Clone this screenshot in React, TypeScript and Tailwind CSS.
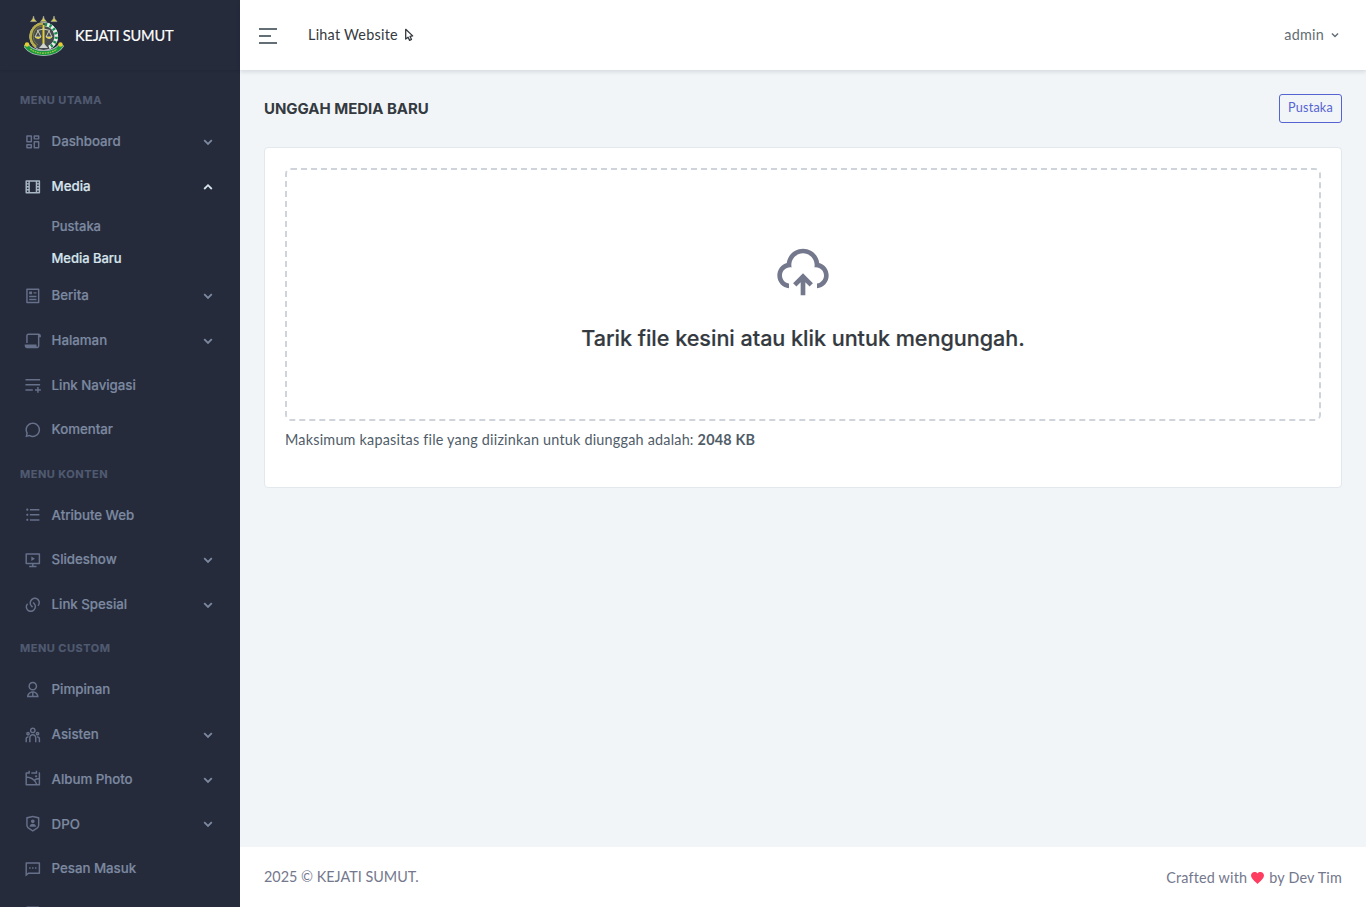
import React from "react";
import {
  RiArticleLine,
  RiChat3Line,
  RiDashboardLine,
  RiFilePaper2Line,
  RiFilmLine,
  RiGalleryLine,
  RiLinksLine,
  RiListUnordered,
  RiMessage2Line,
  RiPlayListAddLine,
  RiShieldUserLine,
  RiSlideshow3Line,
  RiTeamLine,
  RiUploadCloud2Line,
  RiUser2Line,
} from "react-icons/ri";

type Icon = React.ComponentType<{ className?: string }>;
type Item = { label: string; icon: Icon; expandable?: boolean; active?: boolean; children?: { label: string; active?: boolean }[] };

const sections: { title: string; items: Item[] }[] = [
  {
    title: "MENU UTAMA",
    items: [
      { label: "Dashboard", icon: RiDashboardLine, expandable: true },
      {
        label: "Media",
        icon: RiFilmLine,
        expandable: true,
        active: true,
        children: [{ label: "Pustaka" }, { label: "Media Baru", active: true }],
      },
      { label: "Berita", icon: RiArticleLine, expandable: true },
      { label: "Halaman", icon: RiFilePaper2Line, expandable: true },
      { label: "Link Navigasi", icon: RiPlayListAddLine },
      { label: "Komentar", icon: RiChat3Line },
    ],
  },
  {
    title: "MENU KONTEN",
    items: [
      { label: "Atribute Web", icon: RiListUnordered },
      { label: "Slideshow", icon: RiSlideshow3Line, expandable: true },
      { label: "Link Spesial", icon: RiLinksLine, expandable: true },
    ],
  },
  {
    title: "MENU CUSTOM",
    items: [
      { label: "Pimpinan", icon: RiUser2Line },
      { label: "Asisten", icon: RiTeamLine, expandable: true },
      { label: "Album Photo", icon: RiGalleryLine, expandable: true },
      { label: "DPO", icon: RiShieldUserLine, expandable: true },
      { label: "Pesan Masuk", icon: RiMessage2Line },
      { label: "", icon: RiArticleLine },
    ],
  },
];

function Chevron({ up = false, className = "" }: { up?: boolean; className?: string }) {
  return (
    <svg viewBox="0 0 10 10" className={className} fill="none" stroke="currentColor" strokeWidth="1.8">
      <path d={up ? "M1.2 7 5 3.2 8.8 7" : "M1.2 3.2 5 7 8.8 3.2"} />
    </svg>
  );
}

function Emblem() {
  return (
    <svg viewBox="0 0 40 40" className="mt-0.5 h-10 w-10 shrink-0">
      {[9.5, 19.5, 30].map((x) => (
        <path key={x} d={`M${x} 0l.8 3 2.2 2.6h-6L${x - 0.8} 3z`} fill="#d9cd4a" stroke="#a9aba4" strokeWidth=".6" />
      ))}
      <circle cx="19.7" cy="20.5" r="14" fill="#454b50" stroke="#b9bfc4" strokeWidth="1" />
      <path d="M19 7.5A13 13 0 0 0 12 31" fill="none" stroke="#b9ad48" strokeWidth="2.6" />
      <path d="M18 10a10.5 10.5 0 0 0-4 19" fill="none" stroke="#7c7a3e" strokeWidth="1" />
      <path d="M21 8.4a12 12 0 0 1 4 23" fill="none" stroke="#e9eee9" strokeWidth="3.6" />
      <path d="M21 8.4a12 12 0 0 1 4 23" fill="none" stroke="#168f4c" strokeWidth="3.2" strokeDasharray="2.2 2.4" />
      <path d="M19.5 9v22" stroke="#e3cf3c" strokeWidth="2" />
      <path d="M13 14.5q6.5-3 13 0M14 15l-3 6h6zM25 15l-3 6h6z" fill="none" stroke="#dfe0bd" strokeWidth=".9" />
      <path d="M10.8 21h6.4q-3 4-6.4 0zM21.8 21h6.4q-3 4-6.4 0z" fill="#e3d25a" />
      <path d="M15 32l4.5-5 4.5 5z" fill="#cfd4d0" />
      <path d="M1.5 28.5q5 8.6 18.2 8.6T37.8 28.5" fill="none" stroke="#b7bdc0" strokeWidth="5.6" />
      <path d="M1.8 29q5 8.1 17.9 8.1T37.5 29" fill="none" stroke="#189a3d" strokeWidth="4.2" />
      <path d="M6.5 33q5 4.1 13.2 4.1T32.9 33" fill="none" stroke="#b9d04a" strokeWidth="1.2" strokeDasharray="1.6 .9" />
      <circle cx="3" cy="28.5" r="2.2" fill="#e5cf2e" />
      <circle cx="36.5" cy="28.5" r="2.2" fill="#e5cf2e" />
    </svg>
  );
}

function NavItem({ item }: { item: Item }) {
  const IconView = item.icon;
  return (
    <li>
      <a
        className={`flex h-[44.75px] items-center pr-[27px] pl-6 text-[13.3px] font-medium ${
          item.active ? "text-[#d7e4ec]" : "text-[#7c89a0]"
        }`}
      >
        <IconView className={`mr-[10px] h-[17.6px] w-[17.6px] shrink-0 ${item.active ? "text-[#a9b6c4]" : "text-[#66708a]"}`} />
        <span className="grow pt-[1.1px] tracking-[-0.03px] [-webkit-text-stroke:0.2px_currentColor]">{item.label}</span>
        {item.expandable && <Chevron up={item.active} className={`h-[10px] w-[10px] ${item.active ? "" : "mt-px"}`} />}
      </a>
      {item.children && (
        <ul className="h-[64.4px] pl-[51.5px] text-[13px] font-medium">
          {item.children.map((child) => (
            <li
              key={child.label}
              className={`flex h-8 items-center pt-[3px] tracking-[-0.03px] [-webkit-text-stroke:0.2px_currentColor] ${
                child.active ? "text-[#d7e4ec]" : "text-[#7c89a0]"
              }`}
            >
              {child.label}
            </li>
          ))}
        </ul>
      )}
    </li>
  );
}

function Sidebar() {
  return (
    <aside className="flex h-full w-60 shrink-0 flex-col overflow-hidden bg-[#252b3b]">
      <div className="flex h-[70px] shrink-0 items-center pl-6 shadow-[0_1px_2px_rgba(20,24,36,0.2)]">
        <Emblem />
        <span className="ml-[11px] pt-px font-[Lato,sans-serif] text-[14.6px] tracking-[-0.22px] text-white [-webkit-text-stroke:0.2px_currentColor]">
          KEJATI SUMUT
        </span>
      </div>
      <nav className="pt-[9px]">
        {sections.map((section) => (
          <section key={section.title}>
            <h2 className="flex h-[40.4px] items-center pt-[3px] pl-5 text-[11px] font-bold tracking-[0.48px] text-[#505a70] [-webkit-text-stroke:0.2px_currentColor]">
              {section.title}
            </h2>
            <ul>
              {section.items.map((item) => (
                <NavItem key={item.label} item={item} />
              ))}
            </ul>
          </section>
        ))}
      </nav>
    </aside>
  );
}

export default function App() {
  return (
    <div className="flex h-[907px] w-full overflow-hidden bg-[#f1f5f7] font-[Inter,sans-serif]">
      <Sidebar />
      <div className="flex min-w-0 grow flex-col">
        <header className="flex h-[70px] shrink-0 items-center bg-white pr-[27px] pl-[19px] font-[Lato,sans-serif] text-[14.4px] shadow-[0_2px_4px_rgba(15,34,58,0.12)]">
          <div className="mt-0.5 flex flex-col gap-[5px]">
            <span className="h-0.5 w-[18px] bg-[#636e75]" />
            <span className="h-0.5 w-3 bg-[#636e75]" />
            <span className="h-0.5 w-[18px] bg-[#636e75]" />
          </div>
          <a className="ml-[31px] flex items-center tracking-[0.24px] text-[#343a40]">
            <span>Lihat Website</span>
            <svg viewBox="0 0 10 14" className="ml-[6px] h-[14px] w-[10px]" fill="none" stroke="currentColor" strokeWidth="1.3" strokeLinejoin="round">
              <path d="M1.7 1.3 8.7 7.9 6 8.3 7.5 11.5 5.6 12.4 4.1 9.2 1.7 11z" />
            </svg>
          </a>
          <button className="ml-auto flex items-center tracking-[0.24px] text-[#636e75]">
            <span>admin</span>
            <Chevron className="ml-[7px] h-2 w-2" />
          </button>
        </header>
        <main className="grow px-6 pt-6">
          <div className="flex h-[29px] items-center justify-between">
            <h1 className="pt-px text-[15px] font-bold tracking-[-0.03px] text-[#343a40]">UNGGAH MEDIA BARU</h1>
            <button className="h-[29px] w-[63px] rounded-[3px] border border-[#5664d2] pb-px font-[Lato,sans-serif] text-[12.6px] tracking-[0.2px] text-[#5664d2]">
              Pustaka
            </button>
          </div>
          <div className="mt-6 h-[341px] rounded border border-[#e2e8ee] bg-white px-5 pt-5">
            <div className="flex h-[253px] flex-col items-center rounded-md border-2 border-dashed border-[#ced4da] pt-[74px]">
              <RiUploadCloud2Line className="h-14 w-14 text-[#74788d]" />
              <p className="mt-[25px] text-[21.6px] leading-[26px] font-medium tracking-[-0.03px] text-[#343a40] [-webkit-text-stroke:0.2px_currentColor]">
                Tarik file kesini atau klik untuk mengungah.
              </p>
            </div>
            <p className="mt-2 font-[Lato,sans-serif] text-[14.4px] leading-[21px] tracking-[0.21px] text-[#505d69]">
              Maksimum kapasitas file yang diizinkan untuk diunggah adalah: <b>2048 KB</b>
            </p>
          </div>
        </main>
        <footer className="flex h-[60px] shrink-0 items-center justify-between bg-white px-6 font-[Lato,sans-serif] text-[14.4px] text-[#74788d]">
          <span>2025 © KEJATI SUMUT.</span>
          <span className="flex items-center pt-0.5 tracking-[0.18px]">
            Crafted with
            <svg viewBox="0 0 24 22" className="mr-[5px] ml-1 h-3 w-[13px] fill-[#ff3d60]">
              <path d="M12 22 10.3 20.4C4.2 14.9 0 11.1 0 6.5 0 2.8 2.9 0 6.6 0c2.1 0 4.1 1 5.4 2.5C13.3 1 15.3 0 17.4 0 21.1 0 24 2.8 24 6.5c0 4.6-4.2 8.4-10.3 13.9z" />
            </svg>
            by Dev Tim
          </span>
        </footer>
      </div>
    </div>
  );
}
